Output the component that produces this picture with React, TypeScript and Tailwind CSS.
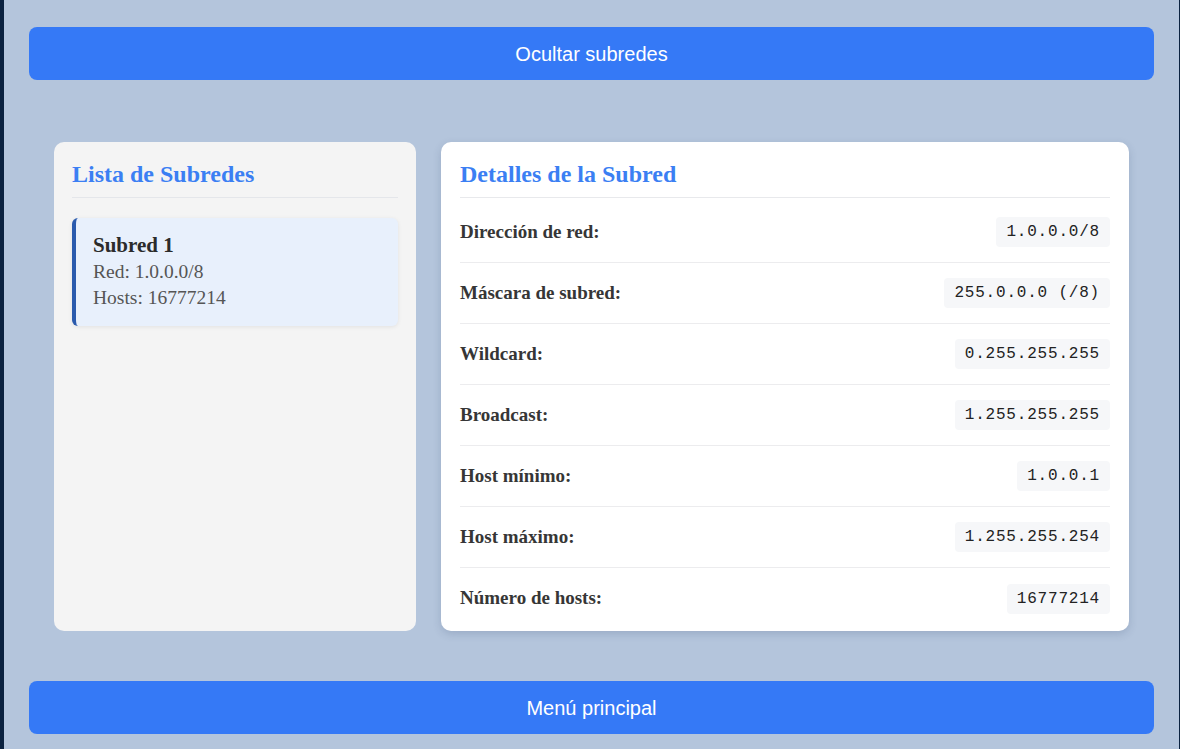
import React from "react";

const rows: [string, string][] = [
  ["Dirección de red:", "1.0.0.0/8"],
  ["Máscara de subred:", "255.0.0.0 (/8)"],
  ["Wildcard:", "0.255.255.255"],
  ["Broadcast:", "1.255.255.255"],
  ["Host mínimo:", "1.0.0.1"],
  ["Host máximo:", "1.255.255.254"],
  ["Número de hosts:", "16777214"],
];

const serif = "font-['Liberation_Serif',serif]";

export default function App() {
  return (
    <div className="flex min-h-screen bg-[#0b2240] pl-[4px] pr-[1px]">
      <main className="flex-1 bg-[#b4c5dc] px-[25px] pt-[27px] pb-[15px]">
        {/* Toggle button */}
        <button className="flex h-[53px] w-full items-center justify-center rounded-lg bg-[#3579f6] font-['Liberation_Sans',sans-serif] text-[20px] text-white">
          Ocultar subredes
        </button>

        <section className="mt-[62px] grid h-[489px] grid-cols-[362px_1fr] gap-[25px] px-[25px]">
          {/* Subnet list */}
          <div className={`rounded-[10px] bg-[#f4f4f4] px-[18px] pt-[19px] ${serif}`}>
            <h2 className="border-b border-[#e4e6ea] pb-[10px] text-[24px] leading-[26px] font-bold text-[#3b7ff3]">
              Lista de Subredes
            </h2>
            <div className="mt-[20px] rounded-md border-l-4 border-[#2a5aad] bg-[#e8f0fc] py-[15px] pl-[17px] shadow-[0_1px_4px_rgba(0,0,0,0.08)]">
              <div className="text-[21px] leading-[24px] font-bold text-[#2b2b2b]">Subred 1</div>
              <div className="mt-[2px] text-[19.5px] leading-[26px] text-[#555]">Red: 1.0.0.0/8</div>
              <div className="text-[19.5px] leading-[26px] text-[#555]">Hosts: 16777214</div>
            </div>
          </div>

          {/* Subnet details */}
          <div className={`rounded-[10px] bg-white px-[19px] pt-[19px] shadow-[0_3px_8px_rgba(40,60,100,0.18)] ${serif}`}>
            <h2 className="border-b border-[#e8e9ec] pb-[10px] text-[24px] leading-[26px] font-bold text-[#3b7ff3]">
              Detalles de la Subred
            </h2>
            <div className="mt-[4px]">
              {rows.map(([label, value], i) => (
                <div
                  key={label}
                  className={`flex h-[61px] items-center justify-between ${i < rows.length - 1 ? "border-b border-[#ececee]" : ""}`}
                >
                  <span className="text-[19px] font-bold text-[#363636]">{label}</span>
                  <span className="flex h-[30px] items-center rounded bg-[#f6f7f9] px-[10px] font-['Liberation_Mono',monospace] text-[16px] tracking-wider text-[#222]">
                    {value}
                  </span>
                </div>
              ))}
            </div>
          </div>
        </section>

        <button className="mt-[50px] flex h-[53px] w-full items-center justify-center rounded-lg bg-[#3579f6] font-['Liberation_Sans',sans-serif] text-[20px] text-white">
          Menú principal
        </button>
      </main>
    </div>
  );
}
